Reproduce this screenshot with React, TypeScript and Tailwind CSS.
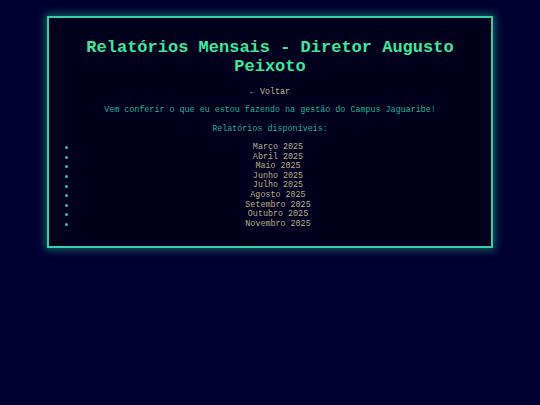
export default function App() {
  const months = [
    "Março 2025",
    "Abril 2025",
    "Maio 2025",
    "Junho 2025",
    "Julho 2025",
    "Agosto 2025",
    "Setembro 2025",
    "Outubro 2025",
    "Novembro 2025",
  ];

  return (
    <div
      className="min-h-[405px] w-full bg-[#000030] pt-[16px]"
      style={{ fontFamily: '"Courier New", Courier, "Liberation Mono", monospace' }}
    >
      <div className="mx-auto w-[446px] border-2 border-[#2fd3a6] bg-[#00001c] px-[13px] pt-[20px] pb-[9px] text-center shadow-[0_0_8px_2px_rgba(47,211,166,0.45)]">
        <h1 className="text-[17px] font-bold leading-[19px] text-[#36eb9e]">
          Relatórios Mensais - Diretor Augusto Peixoto
        </h1>

        <p className="mt-[12px] text-[8.4px] leading-[9.6px] text-[#c2b68e]">
          <a href="#">← Voltar</a>
        </p>

        <p className="mt-[8.4px] text-[8.4px] leading-[9.6px] text-[#20b596]">
          Vem conferir o que eu estou fazendo na gestão do Campus Jaguaribe!
        </p>

        <p className="mt-[9.4px] text-[8.4px] leading-[9.6px] text-[#20b596]">
          Relatórios disponíveis:
        </p>

        <ul className="mt-[8.4px] mb-[8px] pl-[16px] text-[8.4px] leading-[9.6px] text-[#b9ae86]">
          {months.map((m) => (
            <li key={m} className="relative">
              {/* bullet */}
              <span className="absolute left-[-13px] top-[3.3px] h-[3px] w-[3px] rounded-full bg-[#2ccaa2]" />
              <a href="#">{m}</a>
            </li>
          ))}
        </ul>
      </div>
    </div>
  );
}
